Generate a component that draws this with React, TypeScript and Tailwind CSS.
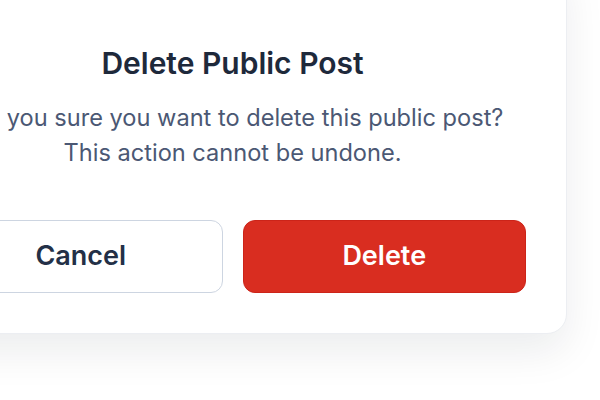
const FONT = "font-['Inter','Noto_Sans',sans-serif]"

export default function App() {
  return (
    <div className={`h-[400px] w-[600px] overflow-hidden bg-white ${FONT}`}>
      <div className="-ml-[102px] -mt-[40px] w-[669px] rounded-[20px] border border-[#eceef2] bg-white px-[40px] pb-[40px] pt-[84px] shadow-[0_18px_40px_rgba(15,23,42,0.08)]">
        {/* Header */}
        <h2 className="text-center text-[30px] font-semibold leading-[36px] text-[#1e293b]">
          Delete Public Post
        </h2>
        <p className="mt-[19px] text-center text-[23.6px] leading-[35px] text-[#4b5874]">
          Are you sure you want to delete this public post?
          <br />
          This action cannot be undone.
        </p>

        {/* Actions */}
        <div className="mt-[50px] grid grid-cols-2 gap-[20px]">
          <button
            type="button"
            className="flex h-[73px] items-center justify-center rounded-[12px] border-[1.5px] border-[#cdd5e1] bg-white text-[27px] font-semibold text-[#233047]"
          >
            Cancel
          </button>
          <button
            type="button"
            className="flex h-[73px] items-center justify-center rounded-[12px] border border-[#cc2419] bg-[#d92d20] text-[27px] font-semibold text-white"
          >
            Delete
          </button>
        </div>
      </div>
    </div>
  )
}
